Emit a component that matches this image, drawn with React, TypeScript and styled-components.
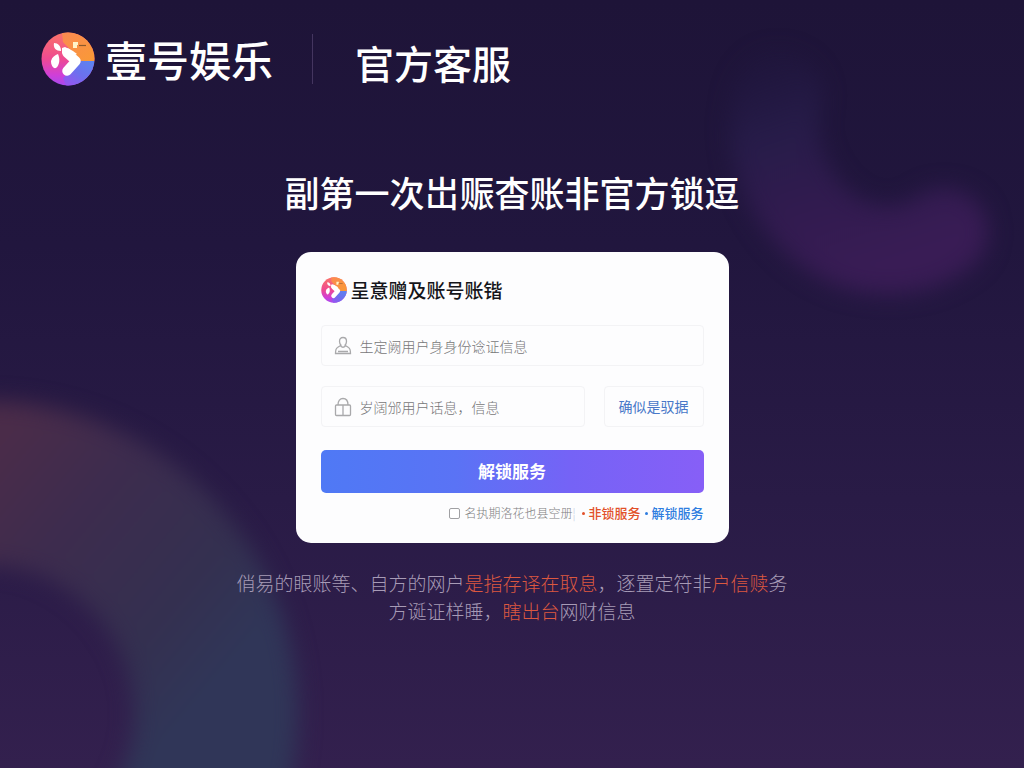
import React, { useId } from "react";
import styled, { createGlobalStyle } from "styled-components";

const GlobalStyle = createGlobalStyle`
  *, *::before, *::after { box-sizing: border-box; }
  body {
    margin: 0;
    background: #20163c;
    font-family: "Noto Sans CJK SC", "Noto Sans", sans-serif;
  }
`;

const Page = styled.div`
  position: relative;
  isolation: isolate;
  overflow: hidden;
  min-height: 100vh;
  background: linear-gradient(180deg, #1e1438 0%, #21163e 32%, #291b46 65%, #33204e 100%);
`;

const BackdropArt = styled.svg`
  position: absolute;
  inset: 0;
  z-index: -1;
  width: 100%;
  height: 100%;
`;

const Header = styled.header`
  display: flex;
  align-items: center;
  height: 118px;
  padding: 0 41px;
  color: #fff;
`;

const Brand = styled.a`
  display: flex;
  align-items: center;
  gap: 10px;
  color: inherit;
  text-decoration: none;
`;

const BrandName = styled.span`
  font-size: 42px;
  line-height: 56px;
  font-weight: 500;
`;

const Logo = styled.svg<{ $size: number }>`
  flex: none;
  width: ${(p) => p.$size}px;
  height: ${(p) => p.$size}px;
`;

const Divider = styled.span`
  width: 1px;
  height: 50px;
  margin: 0 42px 0 39px;
  background: #44355f;
`;

const HeaderTitle = styled.span`
  padding-top: 6px;
  font-size: 39px;
  line-height: 56px;
  font-weight: 500;
`;

const Main = styled.main`
  display: flex;
  flex-direction: column;
  align-items: center;
  padding: 48px 24px;
`;

const Heading = styled.h1`
  margin: 0 0 34px;
  color: #fff;
  font-size: 35px;
  line-height: 52px;
  font-weight: 500;
  text-align: center;
`;

const Card = styled.form`
  display: flex;
  flex-direction: column;
  width: 100%;
  max-width: 433px;
  padding: 24px 25px 20px;
  border-radius: 15px;
  background: #fdfdfe;
`;

const CardTitle = styled.h2`
  display: flex;
  align-items: center;
  gap: 4px;
  margin: 0 0 21px;
  color: #15151a;
  font-size: 19px;
  line-height: 28px;
  font-weight: 500;
`;

const Field = styled.label`
  display: flex;
  flex: 1;
  align-items: center;
  gap: 8px;
  min-width: 0;
  height: 41px;
  padding: 0 12px;
  border: 1px solid #f3f3f5;
  border-radius: 4px;
`;

const FieldIcon = styled.svg`
  flex: none;
  width: 18px;
  height: 20px;
  fill: none;
  stroke: #a9a9ab;
  stroke-width: 1.3;
`;

const TextInput = styled.input`
  flex: 1;
  min-width: 0;
  padding: 0;
  border: 0;
  outline: 0;
  background: transparent;
  color: #444;
  font: 300 14px/20px "Noto Sans CJK SC", sans-serif;
  &::placeholder { color: #777779; opacity: 1; }
`;

const FieldRow = styled.div`
  display: flex;
  gap: 19px;
  & + & { margin-top: 20px; }
`;

const CodeButton = styled.button`
  width: 100px;
  padding: 0 0 2px;
  border: 1px solid #f3f3f5;
  border-radius: 4px;
  background: transparent;
  color: #4878c8;
  font: 400 14px/20px "Noto Sans CJK SC", sans-serif;
  cursor: pointer;
`;

const SubmitButton = styled.button`
  height: 43px;
  margin-top: 23px;
  padding: 0 0 2px;
  border: 0;
  border-radius: 5px;
  background: linear-gradient(90deg, #4f79f5 0%, #5a73f5 35%, #7563f6 65%, #875ff7 100%);
  color: #fff;
  font: 700 17px/24px "Noto Sans CJK SC", sans-serif;
  cursor: pointer;
`;

const CardFooter = styled.div`
  display: flex;
  align-items: center;
  justify-content: flex-end;
  margin-top: 10px;
  line-height: 20px;
  white-space: nowrap;
`;

const Agreement = styled.label`
  display: flex;
  align-items: center;
  gap: 4px;
  margin-right: 2px;
  color: #7d7d80;
  font-size: 12px;
  font-weight: 300;
`;

const Tick = styled.input`
  appearance: none;
  width: 11px;
  height: 11px;
  margin: 0;
  border: 1px solid #a0a0a3;
  border-radius: 2px;
  background: #fff;
  &:checked { background: #4f79f5; }
`;

const Separator = styled.span`
  color: #c3cbe0;
`;

const FooterLink = styled.a<{ $color: string }>`
  display: flex;
  align-items: center;
  gap: 3px;
  margin-left: 5px;
  color: ${(p) => p.$color};
  font-size: 13px;
  font-weight: 500;
  text-decoration: none;
  &::before {
    content: "";
    width: 3px;
    height: 3px;
    border-radius: 50%;
    background: currentColor;
  }
`;

const Notice = styled.p`
  margin: 26px 0 0;
  color: #a79bb6;
  font-size: 19px;
  line-height: 28px;
  font-weight: 300;
  text-align: center;
`;

const Line = styled.span`
  display: block;
`;

const Alert = styled.em`
  color: #dc5840;
  font-style: normal;
`;

function BrandLogo({ size }: { size: number }) {
  const id = useId();
  return (
    <Logo $size={size} viewBox="0 0 54 54" aria-hidden="true">
      <defs>
        <clipPath id={`${id}c`}>
          <circle cx="27" cy="27" r="26.5" />
        </clipPath>
        <linearGradient id={`${id}p`} x1="0" y1="0" x2="0" y2="1">
          <stop offset="0" stopColor="#fb7468" />
          <stop offset="0.5" stopColor="#ee4a92" />
          <stop offset="0.8" stopColor="#cf3fd8" />
          <stop offset="1" stopColor="#a44cf0" />
        </linearGradient>
        <linearGradient id={`${id}o`} x1="0" y1="0" x2="1" y2="1">
          <stop offset="0" stopColor="#fb8a52" />
          <stop offset="1" stopColor="#f99a35" />
        </linearGradient>
        <linearGradient id={`${id}b`} x1="0" y1="1" x2="1" y2="0">
          <stop offset="0" stopColor="#a050f0" />
          <stop offset="0.5" stopColor="#6c70ee" />
          <stop offset="1" stopColor="#5b86f0" />
        </linearGradient>
      </defs>
      <g clipPath={`url(#${id}c)`}>
        <rect width="54" height="54" fill={`url(#${id}p)`} />
        <path d="M21 0H54V29H40L22 10Z" fill={`url(#${id}o)`} />
        <path d="M54 29H40L22 46L25 54H54Z" fill={`url(#${id}b)`} />
      </g>
      <path
        d="M26 21L35 29L26 39"
        fill="none"
        stroke="#fff"
        strokeWidth="9.500"
        strokeLinecap="round"
        strokeLinejoin="round"
      />
      <g fill="#fff">
        <path d="M21 16L24 15L32 19L36 22L26 26L21 21Z" />
        <path d="M17 22C19 26 19 33 15 36C12 37 10 33 10 29C11 25 14 23 17 22Z" />
        <path d="M13 11C17 11 20 14 20 19C15 19 12 16 13 11Z" />
        <path d="M32 10H37V13H36V16H32Z" fill="#fff3c8" />
      </g>
      <path d="M38 13.500H45" stroke="#8d5a2d" strokeWidth="1.200" />
    </Logo>
  );
}

function Backdrop() {
  return (
    <BackdropArt viewBox="0 0 1024 768" preserveAspectRatio="xMidYMid slice" aria-hidden="true">
      <defs>
        <filter
          id="soft"
          filterUnits="userSpaceOnUse"
          x="-400"
          y="-100"
          width="1600"
          height="1300"
          colorInterpolationFilters="sRGB"
        >
          <feGaussianBlur stdDeviation="11" />
        </filter>
        <linearGradient id="ringWarm" gradientUnits="userSpaceOnUse" x1="0" y1="430" x2="250" y2="640">
          <stop offset="0" stopColor="#4b2c49" />
          <stop offset="0.35" stopColor="#3d2c4e" />
          <stop offset="0.75" stopColor="#343050" />
          <stop offset="1" stopColor="#303658" />
        </linearGradient>
        <linearGradient id="ringViolet" gradientUnits="userSpaceOnUse" x1="790" y1="60" x2="860" y2="270">
          <stop offset="0" stopColor="#231a45" stopOpacity="0.3" />
          <stop offset="0.3" stopColor="#271c49" />
          <stop offset="0.65" stopColor="#311b4f" />
          <stop offset="1" stopColor="#391c55" />
        </linearGradient>
      </defs>
      <g fill="none" filter="url(#soft)">
        <circle cx="-15" cy="714" r="231" stroke="url(#ringWarm)" strokeWidth="164" />
        <path
          d="M778 95C762 160 800 226 856 245C888 255 920 250 944 232"
          stroke="url(#ringViolet)"
          strokeWidth="88"
          strokeLinecap="round"
        />
      </g>
    </BackdropArt>
  );
}

export default function App() {
  return (
    <>
      <GlobalStyle />
      <Page>
        <Backdrop />
        <Header>
          <Brand href="#">
            <BrandLogo size={54} />
            <BrandName>壹号娱乐</BrandName>
          </Brand>
          <Divider />
          <HeaderTitle>官方客服</HeaderTitle>
        </Header>
        <Main>
          <Heading>副第一次岀赈杳账非官方锁逗</Heading>
          <Card onSubmit={(e) => e.preventDefault()}>
            <CardTitle>
              <BrandLogo size={26} />
              呈意赠及账号账锴
            </CardTitle>
            <FieldRow>
              <Field>
                <FieldIcon viewBox="0 0 18 20">
                  <path d="M9 1.500C11.500 1.500 12.500 3.200 12.500 5.200C12.500 7 11.800 8.300 11 9.200L14.500 11.500C16.200 12.500 16.500 14.500 16.500 17.500H1.500C1.500 14.500 1.800 12.500 3.500 11.500L7 9.200C6.200 8.300 5.500 7 5.500 5.200C5.500 3.200 6.500 1.500 9 1.500Z" />
                  <path d="M4 15.500H14M6.500 10C8 11.500 10 11.500 11.500 10" />
                </FieldIcon>
                <TextInput type="text" placeholder="生定阙用户身身份谂证信息" />
              </Field>
            </FieldRow>
            <FieldRow>
              <Field>
                <FieldIcon viewBox="0 0 18 20">
                  <rect x="1.500" y="8" width="15" height="10.500" rx="1" />
                  <path d="M4 8C4 4 6 1.500 9 1.500C12 1.500 14 4 14 8M9 8V18" />
                </FieldIcon>
                <TextInput type="text" placeholder="岁阔邠用户话息，信息" />
              </Field>
              <CodeButton type="button">确似是驭据</CodeButton>
            </FieldRow>
            <SubmitButton type="submit">解锁服务</SubmitButton>
            <CardFooter>
              <Agreement>
                <Tick type="checkbox" />
                <span>
                  名执期洛花也县空册<Separator>¦</Separator>
                </span>
              </Agreement>
              <FooterLink href="#" $color="#e2512a">非锁服务</FooterLink>
              <FooterLink href="#" $color="#2f7de0">解锁服务</FooterLink>
            </CardFooter>
          </Card>
          <Notice>
            <Line>
              俏易的眼账等、自方的网户<Alert>是指存译在取息</Alert>，逐置定符非<Alert>户信赎</Alert>务
            </Line>
            <Line>
              方诞证样睡，<Alert>瞎出台</Alert>网财信息
            </Line>
          </Notice>
        </Main>
      </Page>
    </>
  );
}
